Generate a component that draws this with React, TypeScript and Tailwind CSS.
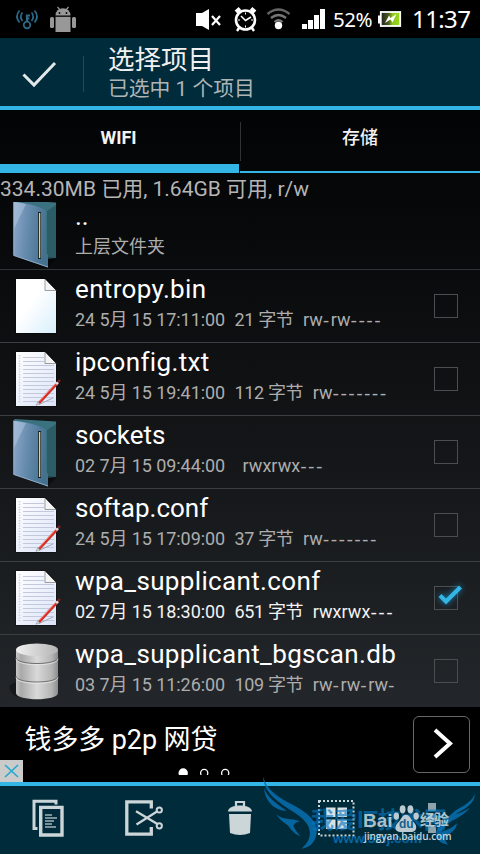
import type { ReactNode } from "react";
import { clsx } from "clsx";

type FileKind = "folder" | "blank" | "text" | "database";

type FileEntry = {
  name: string;
  kind: FileKind;
  date: string;
  size?: string;
  mode: string;
  checked?: boolean;
  tight?: boolean;
};

const files: FileEntry[] = [
  { name: "entropy.bin", kind: "blank", date: "24 5月 15 17:11:00", size: "21 字节", mode: "rw-rw----" },
  { name: "ipconfig.txt", kind: "text", date: "24 5月 15 19:41:00", size: "112 字节", mode: "rw-------" },
  { name: "sockets", kind: "folder", date: "02 7月 15 09:44:00", mode: "rwxrwx---", tight: true },
  {
    name: "softap.conf",
    kind: "text",
    date: "24 5月 15 17:09:00",
    size: "37 字节",
    mode: "rw-------",
    tight: true,
  },
  {
    name: "wpa_supplicant.conf",
    kind: "text",
    date: "02 7月 15 18:30:00",
    size: "651 字节",
    mode: "rwxrwx---",
    checked: true,
  },
  {
    name: "wpa_supplicant_bgscan.db",
    kind: "database",
    date: "03 7月 15 11:26:00",
    size: "109 字节",
    mode: "rw-rw-rw-",
  },
];

function FolderIcon() {
  return (
    <>
      <path d="M14 3 56 5.5V61l-9 1z" fill="#3b7280" />
      <path d="M47 14 56 8v53l-9-1z" fill="#2c5c66" />
      <path d="M48 60 57 61 48 70z" fill="#000" opacity=".4" />
      <path d="M13.5 4.5C26 6.5 38 8 46 14v42l2 2v12.5L13.5 58.5z" fill="url(#folder)" />
      <path d="M14 5c4 .5 8 1 12 2L14 32z" fill="#c3d6ee" opacity=".4" />
      <path d="M13.8 4.5v54L48 70" fill="none" stroke="#9dbad2" strokeWidth=".8" />
      <path d="M39.5 15v47" stroke="#10202a" strokeWidth="3" />
      <path d="M39.6 16v45" stroke="#e6cf8c" strokeWidth="1.4" />
    </>
  );
}

function PageIcon({ lined }: { lined: boolean }) {
  return (
    <>
      <path d="M15.5 8.5H46L56.5 20v43.5h-41z" fill="#000" opacity=".6" />
      <path d="M16 9h29l11 11.5V63H16z" fill={lined ? "url(#linedPage)" : "url(#page)"} />
      {lined && (
        <>
          <path
            d="M23 14.5h21M23 18.5h21M23 22.5h31M23 26.5h31M23 30.5h31M23 34.5h31M23 38.5h31M23 42.5h31M23 46.5h31M23 50.5h31M23 54.5h31M23 58.5h31"
            stroke="#c3c8dc"
            strokeWidth="1"
          />
          <path d="M19.5 12v48" stroke="#ccd1e2" strokeWidth="1.6" strokeDasharray="1.3 1.4" />
        </>
      )}
      <path d="M45 9v11.5h11z" fill="#f4f4f4" />
      <path d="M45 9v11.5h11" fill="none" stroke="#777" strokeWidth=".7" />
      <path d="M45 8.600 56.400 20.500" stroke="#222" strokeWidth=".8" />
      {lined && (
        <>
          <path d="M39 61.5 53 55" stroke="#a5aabb" strokeWidth="1" />
          <path d="M39 60 58 39.500" stroke="#9c4a4a" strokeWidth="2.700" />
          <path d="M39.500 59.300 57.500 39.500" stroke="#f0281c" strokeWidth="1.800" />
          <path d="M38.900 58.600 56.500 39.400" stroke="#ffc9c0" strokeWidth=".7" />
          <path d="M36 62.300 37.800 58.900 39.800 60.800z" fill="#ddd" stroke="#666" strokeWidth=".4" />
          <path d="M56.200 41.200 58 39.200" stroke="#ddd" strokeWidth="2.400" />
          <path d="M58.300 38.800 60 37" stroke="#8b1a1a" strokeWidth="2.400" />
        </>
      )}
    </>
  );
}

function DatabaseIcon() {
  return (
    <>
      <path d="M9 52c3-4 6-5 9-5v15c-4 0-8-5-9-10z" fill="#000" opacity=".35" />
      <path d="M16 15v43c0 8.300 42 8.300 42 0V15z" fill="url(#metal)" />
      <path d="M16 22.500c0 8 42 8 42 0M16 41c0 8 42 8 42 0" fill="none" stroke="#6f6f6f" />
      <path d="M16 23.800c0 8 42 8 42 0M16 42.300c0 8 42 8 42 0" fill="none" stroke="#ededed" strokeWidth=".7" />
      <ellipse cx="37" cy="14.800" rx="21" ry="6.300" fill="url(#lid)" />
    </>
  );
}

function FileIcon({ kind }: { kind: FileKind }) {
  return (
    <svg className="h-[72px] w-[64px] shrink-0" viewBox="0 0 64 72">
      {kind === "folder" && <FolderIcon />}
      {kind === "blank" && <PageIcon lined={false} />}
      {kind === "text" && <PageIcon lined />}
      {kind === "database" && <DatabaseIcon />}
    </svg>
  );
}

// Gradients shared by every file icon
function IconDefs() {
  return (
    <svg className="absolute h-0 w-0" aria-hidden="true">
      <defs>
        <linearGradient id="folder" x1="0" y1="0" x2="1" y2=".2">
          <stop offset="0" stopColor="#8ea9cc" />
          <stop offset=".5" stopColor="#6389ab" />
          <stop offset="1" stopColor="#45718f" />
        </linearGradient>
        <linearGradient id="page" x1="0" y1="0" x2="1" y2="1">
          <stop offset=".4" stopColor="#fff" />
          <stop offset="1" stopColor="#d8effc" />
        </linearGradient>
        <linearGradient id="linedPage" x1="0" y1="0" x2="1" y2="1">
          <stop offset="0" stopColor="#fff" />
          <stop offset="1" stopColor="#dbe4f8" />
        </linearGradient>
        <linearGradient id="metal">
          <stop offset="0" stopColor="#c8c8c8" />
          <stop offset=".12" stopColor="#a9a9a9" />
          <stop offset=".5" stopColor="#d9d9d9" />
          <stop offset=".85" stopColor="#b5b5b5" />
          <stop offset="1" stopColor="#8c8c8c" />
        </linearGradient>
        <linearGradient id="lid">
          <stop offset="0" stopColor="#f0f0f0" />
          <stop offset="1" stopColor="#b4b4b4" />
        </linearGradient>
      </defs>
    </svg>
  );
}

function StatusBar() {
  return (
    <div className="flex h-[38px] shrink-0 items-center bg-black font-['Noto_Sans'] text-white">
      <svg className="h-[38px] w-[90px]" viewBox="0 0 90 38">
        <g fill="none" stroke="#2b6a88" strokeWidth="1.700">
          <circle cx="27" cy="25" r="3.300" />
          <path d="M27 22v-7.500M27 15.500h3M27 18.500h2.500" strokeWidth="2.200" />
          <path d="M22.500 12.500q-3.500 4 0 8.500M31.500 12.500q3.500 4 0 8.500M19.500 10.500q-5 6 0 12M34.500 10.500q5 6 0 12" />
        </g>
        <g fill="#989898">
          <path d="M55.500 15.500a7.500 7.300 0 0 1 15 0z" />
          <path d="m57.500 7 2.500 3M68.500 7 66 10" stroke="#989898" strokeWidth="1.200" />
          <path d="M55.500 16.800h15V32h-15z" />
          <rect x="50" y="17" width="4" height="11" rx="1.500" />
          <rect x="72" y="17" width="4" height="11" rx="1.500" />
          <circle cx="59.500" cy="13" r=".9" fill="#000" />
          <circle cx="66.500" cy="13" r=".9" fill="#000" />
        </g>
      </svg>
      <svg className="ml-[100px] h-[38px] w-[140px]" viewBox="190 0 140 38">
        <path d="M196 13h6l7-4v21l-7-4h-6z" fill="#fff" />
        <path d="m212 16 8 9m0-9-8 9" stroke="#fff" strokeWidth="2.200" />
        <g fill="none" stroke="#fff">
          <circle cx="245.500" cy="20" r="9.500" strokeWidth="2.600" />
          <path d="m236 12 4-3.500M255 12l-4-3.500" strokeWidth="4" />
          <path d="m239 28-2 3M252 28l2 3" strokeWidth="2.400" />
          <path d="m241 16 4.500 4.500L251 17" strokeWidth="1.500" />
          <path d="M245.500 12.500v2M245.500 25.500v2M238 20h2M251 20h2" />
        </g>
        <g fill="none" stroke="#666" strokeWidth="2.300">
          <path d="M267.500 14q11-9 22 0" />
          <path d="M271 18q7.500-6 15 0" stroke="#777" />
          <path d="M274.500 22q4-3.500 8 0" stroke="#777" />
        </g>
        <circle cx="278.500" cy="25.500" r="3.700" fill="#fff" />
        <path d="M302 24h5v5h-5zM308 20h5v9h-5zM314 15h5v14h-5zM320 9h5v20h-5z" fill="#fff" />
      </svg>
      <span className="ml-[3px] w-[45px] text-[20.500px] leading-none tracking-[-0.5px]">52%</span>
      <svg className="h-[38px] w-[24px]" viewBox="378 0 24 38">
        <defs>
          <linearGradient id="charge">
            <stop offset="0" stopColor="#222" />
            <stop offset=".4" stopColor="#4a5a20" />
            <stop offset=".6" stopColor="#8cc818" />
            <stop offset="1" stopColor="#9ad81c" />
          </linearGradient>
        </defs>
        <path d="M378 15.500h3v8h-3z" fill="#fff" />
        <rect x="380.800" y="12" width="19.400" height="14" fill="url(#charge)" stroke="#fff" strokeWidth="1.800" />
        <path d="m385 23 4-7.500 1.500 2.500 6-4-4 8.500-2-3z" fill="#fff" />
      </svg>
      <span className="ml-[10px] whitespace-nowrap text-[24px] leading-none tracking-[-0.6px]">11:37</span>
    </div>
  );
}

function SelectionHeader() {
  return (
    <header className="flex h-[72px] shrink-0 border-b-4 border-[#33b5e5] bg-[#002b3a]">
      <div className="flex h-[68px] w-[83px] shrink-0">
        <svg className="h-[68px] w-[80px]" viewBox="0 38 80 68">
          <path d="M23.500 74.500 34 85 55 63" fill="none" stroke="#e2e8ea" strokeWidth="3" />
        </svg>
      </div>
      <div className="mt-[18px] h-9 w-px bg-[#20495a]" />
      <div className="ml-[24px] whitespace-nowrap pt-[6px]">
        <h1 className="text-[26.500px] leading-[32px] text-[#f0f0f0]">选择项目</h1>
        <p className="text-[20.800px] leading-[26px] text-[#afb4b6]">已选中 1 个项目</p>
      </div>
    </header>
  );
}

function Tabs() {
  return (
    <nav className="flex h-[63px] shrink-0 text-[18px] text-[#f3f3f3]">
      <div className="flex w-[239px] items-center justify-center border-b-[9px] border-[#33b5e5] pr-[2px] font-bold">
        WIFI
      </div>
      <div className="flex w-[2px] justify-end pt-3">
        <div className="h-[39px] w-px bg-[#303234]" />
      </div>
      <div className="-ml-px flex flex-1 items-center justify-center border-b-2 border-[#33b5e5] pb-[6px] font-medium">
        存储
      </div>
    </nav>
  );
}

function CheckBox({ checked }: { checked?: boolean }) {
  return (
    <div className="relative mr-[22px] ml-auto h-6 w-6 shrink-0 self-center border border-[#4b4e50]">
      {checked && (
        <svg
          className="absolute -left-[6px] -top-[11px] h-9 w-9 drop-shadow-[0_0_3px_#1686b8]"
          viewBox="0 0 36 36"
        >
          <path d="M11 19.500 17 25.500 31.500 11" fill="none" stroke="#33b5e5" strokeWidth="4.200" />
        </svg>
      )}
    </div>
  );
}

// Dashes get a wider face so that each one takes about the width of a letter
function Mode({ value }: { value: string }) {
  const parts = value.match(/-+|[^-]+/g) ?? [];

  return (
    <span>
      {parts.map((part, index) => (
        <span
          key={index}
          className={
            part.startsWith("-")
              ? "font-['DejaVu_Sans'] leading-none tracking-[1.350px]"
              : "tracking-[0.050px]"
          }
        >
          {part}
        </span>
      ))}
    </span>
  );
}

function FileRow({ file }: { file: FileEntry }) {
  return (
    <li className="flex h-[73px] border-b border-[#3c3f41] last:border-transparent">
      <FileIcon kind={file.kind} />
      <div className="ml-[11px] whitespace-pre pt-1">
        <div
          className={clsx(
            "text-[26px] leading-[31px] text-white",
            file.tight ? "tracking-normal" : "tracking-[0.350px]",
          )}
        >
          {file.name}
        </div>
        <div
          className={clsx(
            "flex text-[18px] leading-[30px]",
            file.checked ? "text-[#f2f2f2]" : "text-[#adadad]",
          )}
        >
          <span className="w-[159.500px] tracking-[-0.080px]">{file.date}</span>
          {file.size ? (
            <span className="mr-[9.500px] tracking-[-0.350px]">{file.size}</span>
          ) : (
            <span className="w-2" />
          )}
          <Mode value={file.mode} />
        </div>
      </div>
      <CheckBox checked={file.checked} />
    </li>
  );
}

function AdBanner() {
  return (
    <div className="flex h-[75px] shrink-0 bg-black">
      <div className="flex w-[23px] items-end">
        <div className="h-[22px] w-[23px] bg-[#cbcbcb]">
          <svg className="h-full w-full" viewBox="0 0 23 22">
            <path d="m5 5 13 12M18 5 5 17" stroke="#25aad0" strokeWidth="1.700" />
          </svg>
        </div>
      </div>
      <div className="ml-[1.500px] w-[388.500px]">
        <p className="mt-[13px] whitespace-nowrap text-[27px] leading-[40px] tracking-[-0.1px] text-white">
          钱多多 p2p 网贷
        </p>
        <svg className="ml-[150px] mt-2 h-[7px] w-[60px]" viewBox="0 0 60 7">
          <circle cx="8.200" cy="5" r="4.700" fill="#fff" />
          <circle cx="29.200" cy="5" r="3.600" fill="none" stroke="#fff" strokeWidth="1.300" />
          <circle cx="50.200" cy="5" r="3.600" fill="none" stroke="#fff" strokeWidth="1.300" />
        </svg>
      </div>
      <div className="mt-[9px] flex h-[57px] w-[57px] items-center justify-center rounded-[6px] border border-[#686868]">
        <svg className="h-[55px] w-[55px]" viewBox="414 717 55 55">
          <path d="m435 730 15 13.500L435 757" fill="none" stroke="#fff" strokeWidth="4" />
        </svg>
      </div>
    </div>
  );
}

function ToolButton({ children }: { children: ReactNode }) {
  return (
    <button className="flex flex-1 justify-center pt-3">
      <svg className="h-10 w-10" viewBox="0 0 40 40" fill="none" stroke="#ccd5d8">
        {children}
      </svg>
    </button>
  );
}

function Toolbar() {
  return (
    <div className="flex h-[72px] shrink-0 border-t-4 border-[#33b5e5] bg-[#002b3a]">
      <ToolButton>
        <path d="M28 6.500V3.200H6V30.500h3.500" strokeWidth="3" />
        <path d="M12.700 9.400h21.300v27.600H12.700z" strokeWidth="3.400" />
        <path d="M17 17h7M17 20h12M17 23h9M17 26h7M17 29h11" strokeWidth="1.700" opacity=".8" />
      </ToolButton>
      <ToolButton>
        <path d="M27.300 10.500V3.800H2.800v32.400h24.500V29" strokeWidth="3.300" />
        <path d="M12 13.300 33 25.800M12.500 26.500 33 13.500" strokeWidth="2.300" />
        <circle cx="35.300" cy="12" r="2.600" strokeWidth="2" />
        <circle cx="35.300" cy="27.800" r="2.600" strokeWidth="2" />
      </ToolButton>
      <ToolButton>
        <path d="M16 8V4h8v4" strokeWidth="2.200" />
        <path
          d="M8 13.500c0-8 24-8 24 0zM9 16h22L30 35q-10 4-20 0z"
          fill="#ccd5d8"
          stroke="none"
        />
      </ToolButton>
      <ToolButton>
        <path d="M3 3h34.500v34.500H3z" strokeWidth="2" strokeDasharray="2 2" />
        <path d="M10 9.500h9.500V19H10zM21.500 9.500h9.500V19h-9.500zM10 21.500h9.500V31H10zM21.500 21.500h9.500V31h-9.500z" fill="#d9e1e4" stroke="none" />
      </ToolButton>
      <ToolButton>
        <path d="M16 5h8v8h-8zM16 16h8v8h-8zM16 27h8v8h-8z" fill="#8fa3ab" stroke="none" />
      </ToolButton>
    </div>
  );
}

function Watermarks() {
  return (
    <div className="pointer-events-none absolute bottom-0 right-0 h-[90px] w-[240px]">
      <svg className="absolute inset-0 h-full w-full" viewBox="0 192 720 270" fill="#0872b5" opacity=".82">
        <path d="M69 230C83 274 115 291 155 313C205 340 232 363 230 397C228 425 210 444 184 446C207 427 216 405 205 379C191 347 145 330 112 302C85 280 70 257 69 230z" />
        <path d="M72 265C86 297 107 309 140 333C103 332 75 303 72 265z" />
        <path d="M108 342C128 362 153 353 180 364C165 367 166 371 160 377C166 392 174 400 182 409C154 399 153 383 139 373C124 363 116 354 108 342z" />
        <path d="M705 281C690 316 657 318 631 345C607 365 586 381 589 403C592 423 604 431 624 434C612 420 616 411 627 403C642 393 649 384 651 370C634 386 617 392 604 395C618 361 666 356 689 323C675 333 660 338 646 343C674 325 703 314 705 281z" />
      </svg>
      <div className="absolute left-[71px] top-[44px] whitespace-nowrap text-[23px] font-bold leading-[26px] text-[#0878c0]/65">
        我爱IT技术网
      </div>
      <div className="absolute left-[93px] top-[67px] whitespace-nowrap font-['Liberation_Sans'] text-[13.500px] font-bold leading-4 text-[#0878c0]/80">
        www.52ij.com
      </div>
      <div className="absolute left-[123px] top-[45px] font-['Liberation_Sans'] text-[19px] font-bold leading-6 text-[#c3d4da]/90">
        Bai
      </div>
      <svg className="absolute left-[152px] top-[40px] h-[29px] w-[28px]" viewBox="0 0 28 30" fill="#bccbd2">
        <ellipse cx="4" cy="12.500" rx="2.800" ry="3.800" />
        <ellipse cx="10.500" cy="5.500" rx="3" ry="4.300" />
        <ellipse cx="18.500" cy="5.500" rx="3" ry="4.300" />
        <ellipse cx="24.500" cy="12.500" rx="2.800" ry="3.800" />
        <path d="M14 11c4 0 5 5 8 8 5 5 2 10-2 10H8c-5 0-7-5-2-10 3-3 4-8 8-8z" />
      </svg>
      <div className="absolute left-[159px] top-[52px] font-['Liberation_Sans'] text-[12px] font-bold leading-4 text-[#12618f]">
        du
      </div>
      <div className="absolute left-[180px] top-[47px] whitespace-nowrap text-[14.500px] font-bold leading-5 text-[#c3d4da]/90">
        经验
      </div>
      <div className="absolute left-[124px] top-[64px] whitespace-nowrap font-['Open_Sans'] text-[10px] font-semibold leading-4 tracking-[-0.050px] text-[#c9d5da]">
        jingyan.baidu.com
      </div>
    </div>
  );
}

export default function App() {
  return (
    <div className="relative flex h-[854px] w-[480px] flex-col overflow-hidden bg-black font-[Roboto,'Noto_Sans_CJK_SC',sans-serif]">
      <IconDefs />
      <StatusBar />
      <SelectionHeader />
      <main className="flex h-[597px] shrink-0 flex-col bg-linear-to-b from-[#030405] via-[#111315] to-[#23272b]">
        <Tabs />
        <p className="h-[29px] shrink-0 whitespace-nowrap text-[21px] leading-[32px] text-[#b5b5b5]">
          334.30MB 已用, 1.64GB 可用, r/w
        </p>
        {/* The parent entry is scrolled partly under the storage line */}
        <div className="flex h-[68px] shrink-0 items-end overflow-hidden border-b border-[#303335]">
          <div className="flex h-[72px]">
            <FileIcon kind="folder" />
            <div className="ml-[11px] whitespace-nowrap pt-1">
              <div className="text-[26px] leading-[31px] text-white">..</div>
              <div className="text-[18px] leading-[30px] text-[#adadad]">上层文件夹</div>
            </div>
          </div>
        </div>
        <ul>
          {files.map((file) => (
            <FileRow key={file.name} file={file} />
          ))}
        </ul>
      </main>
      <AdBanner />
      <Toolbar />
      <Watermarks />
    </div>
  );
}
